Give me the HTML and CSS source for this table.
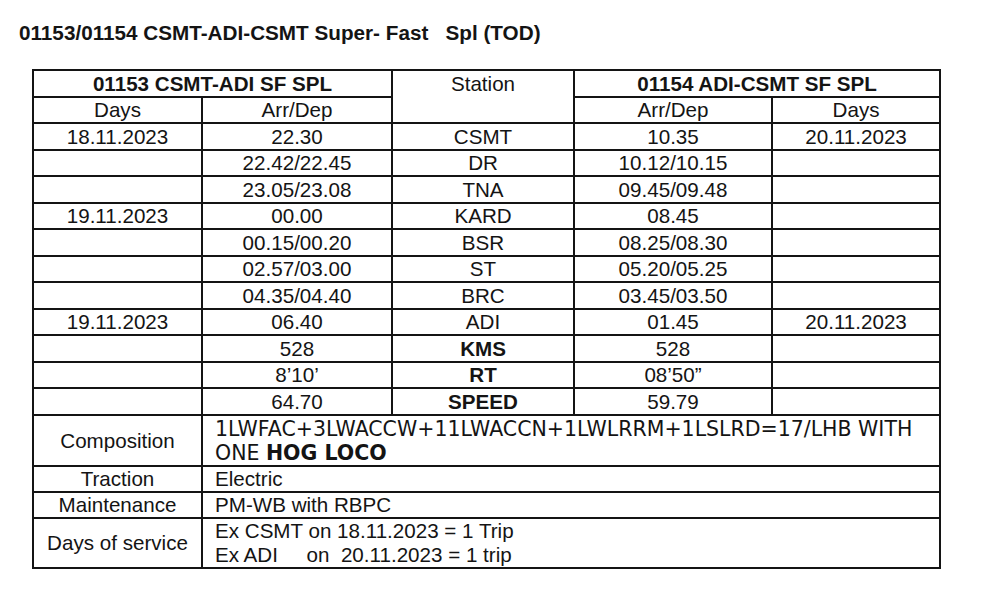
FILE: index.html
```html
<!DOCTYPE html>
<html lang="en">
<head>
<meta charset="utf-8">
<title>01153/01154 CSMT-ADI-CSMT Super-Fast Spl (TOD)</title>
<link rel="stylesheet" href="styles.css">
</head>
<body>
<main class="page">
  <h1 class="title">01153/01154 CSMT-ADI-CSMT Super- Fast   Spl (TOD)</h1>
  <table class="tt">
    <colgroup>
      <col class="c1"><col class="c2"><col class="c3"><col class="c4"><col class="c5">
    </colgroup>
    <tr class="r">
      <th colspan="2" class="bold">01153 CSMT-ADI SF SPL</th>
      <th rowspan="2" class="station">Station</th>
      <th colspan="2" class="bold">01154 ADI-CSMT SF SPL</th>
    </tr>
    <tr class="r"><td>Days</td><td>Arr/Dep</td><td>Arr/Dep</td><td>Days</td></tr>
    <tr class="r"><td>18.11.2023</td><td>22.30</td><td>CSMT</td><td>10.35</td><td>20.11.2023</td></tr>
    <tr class="r"><td></td><td>22.42/22.45</td><td>DR</td><td>10.12/10.15</td><td></td></tr>
    <tr class="r"><td></td><td>23.05/23.08</td><td>TNA</td><td>09.45/09.48</td><td></td></tr>
    <tr class="r"><td>19.11.2023</td><td>00.00</td><td>KARD</td><td>08.45</td><td></td></tr>
    <tr class="r"><td></td><td>00.15/00.20</td><td>BSR</td><td>08.25/08.30</td><td></td></tr>
    <tr class="r"><td></td><td>02.57/03.00</td><td>ST</td><td>05.20/05.25</td><td></td></tr>
    <tr class="r"><td></td><td>04.35/04.40</td><td>BRC</td><td>03.45/03.50</td><td></td></tr>
    <tr class="r"><td>19.11.2023</td><td>06.40</td><td>ADI</td><td>01.45</td><td>20.11.2023</td></tr>
    <tr class="r"><td></td><td>528</td><td class="bold">KMS</td><td>528</td><td></td></tr>
    <tr class="r"><td></td><td>8’10’</td><td class="bold">RT</td><td>08’50”</td><td></td></tr>
    <tr class="r"><td></td><td>64.70</td><td class="bold">SPEED</td><td>59.79</td><td></td></tr>
    <tr class="comp">
      <td>Composition</td>
      <td colspan="4" class="text verd">1LWFAC+3LWACCW+11LWACCN+1LWLRRM+1LSLRD=17/LHB WITH<br>ONE <b>HOG LOCO</b></td>
    </tr>
    <tr class="single"><td>Traction</td><td colspan="4" class="text">Electric</td></tr>
    <tr class="single"><td>Maintenance</td><td colspan="4" class="text">PM-WB with RBPC</td></tr>
    <tr class="days">
      <td>Days of service</td>
      <td colspan="4" class="text pre">Ex CSMT on 18.11.2023 = 1 Trip<br>Ex ADI     on  20.11.2023 = 1 trip</td>
    </tr>
  </table>
</main>
</body>
</html>
```
FILE: styles.css
```css
html, body {
  margin: 0;
  padding: 0;
  background: #ffffff;
}

.page {
  padding: 21px 0 0 0;
  color: #141414;
  font-family: "Liberation Sans", Arial, sans-serif;
}

.title {
  margin: 0 0 0 19px;
  font-size: 20.7px;
  font-weight: bold;
  line-height: 24px;
  white-space: pre;
}

.tt {
  margin: 24px 0 0 32px;
  border-collapse: separate;
  border-spacing: 0;
  table-layout: fixed;
  width: 909px;
  border-left: 2px solid #141414;
  border-top: 2px solid #141414;
  font-size: 20.6px;
  line-height: 23px;
}

.c1 { width: 169px; }
.c2 { width: 190px; }
.c3 { width: 182px; }
.c4 { width: 198px; }
.c5 { width: 168px; }

.tt th,
.tt td {
  box-sizing: border-box;
  padding: 0;
  border-right: 2px solid #141414;
  border-bottom: 2px solid #141414;
  text-align: center;
  vertical-align: middle;
  font-weight: normal;
  white-space: nowrap;
}

.tt .bold {
  font-weight: bold;
}

.r th,
.r td {
  height: 26.5px;
}

.tt .station {
  vertical-align: top;
  padding-top: 1px;
}

.comp td { height: 49px; }
.single td { height: 26px; }
.days td { height: 50.5px; }

.tt .text {
  text-align: left;
  padding-left: 12px;
  line-height: 24px;
}

.tt .verd {
  font-family: "DejaVu Sans", Verdana, sans-serif;
  font-size: 20.5px;
  padding-top: 1px;
}

.tt .verd b {
  font-weight: bold;
}

.tt .pre {
  white-space: pre;
}
```
